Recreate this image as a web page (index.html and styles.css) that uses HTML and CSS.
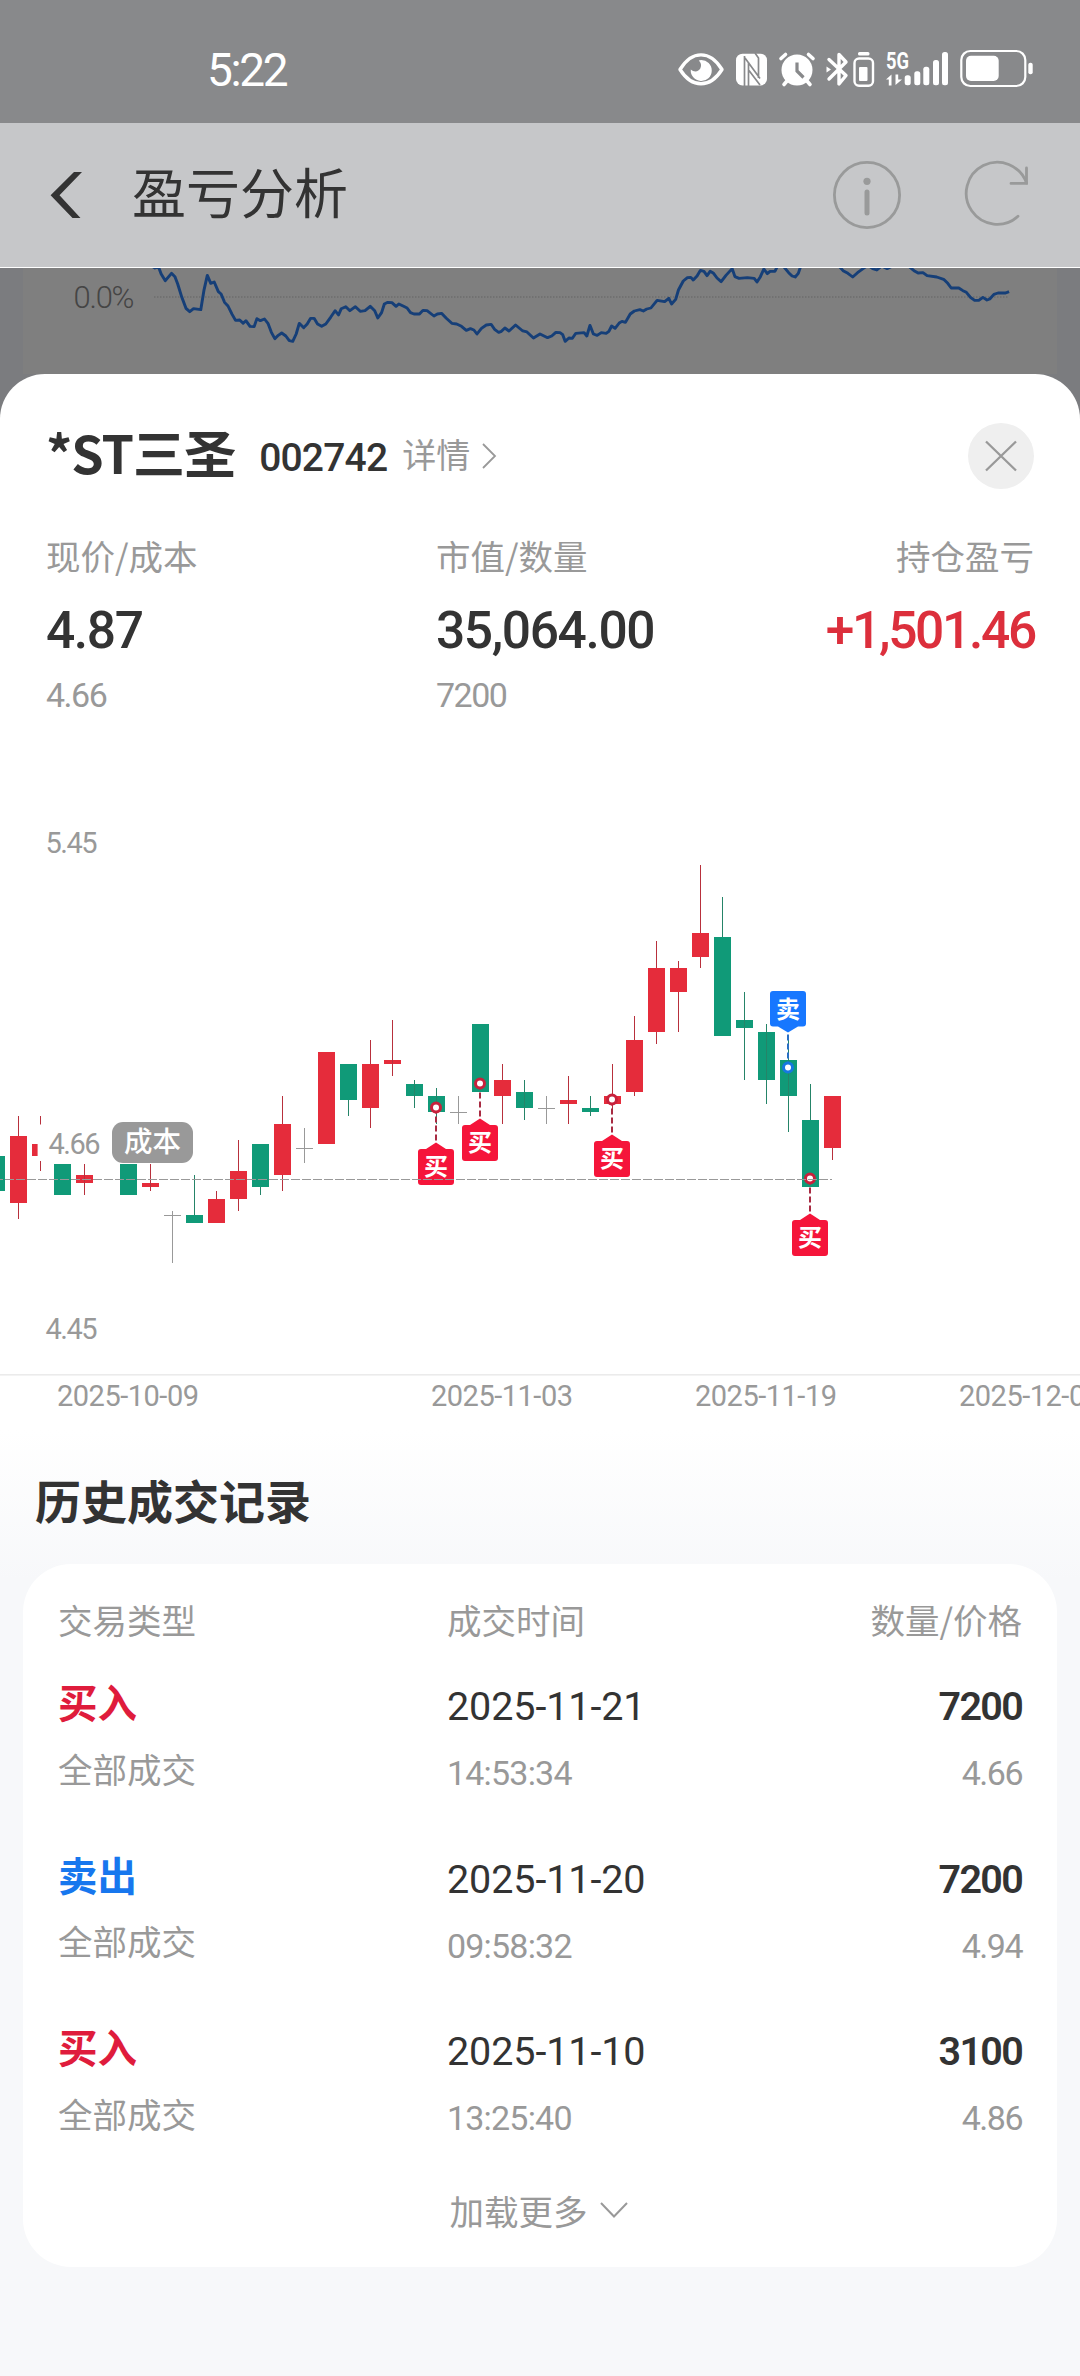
FILE: index.html
```html
<!DOCTYPE html>
<html lang="zh-CN">
<head>
<meta charset="utf-8">
<title>盈亏分析</title>
<link rel="stylesheet" href="styles.css">
</head>
<body>
<div class="page">
  <div class="status">
    <span class="clock">5:22</span>
    <svg class="status-icons" viewBox="670 45 370 50" width="370" height="50">
      <g fill="none" stroke="#fff" stroke-width="3.4">
        <path d="M680 69.500C692 50 710 50 722 69.500C710 88.500 692 88.500 680 69.500Z" stroke-linejoin="round"/>
      </g>
      <path fill="#fff" d="M701 60a10.500 10.500 0 1 1-10.200 9.500c3 3 8 2.500 9.600-1.200c1.300-3 .600-5.800-1.600-7.800z"/>
      <rect x="736" y="53.700" width="31" height="31.800" rx="6.500" fill="#fff"/>
      <path fill="none" stroke="#88898b" stroke-width="1.700" d="M744.500 56V86M745 58L760 78.500M748.500 62V86M749 70.500L760 85M755 53L758.500 58V78"/>
      <circle cx="797" cy="70" r="15.500" fill="#fff"/>
      <g fill="none" stroke="#fff" stroke-width="3.600" stroke-linecap="round">
        <path d="M781 58.500l4.500-4M813 58.500l-4.500-4M787 81l-3 3.500M807 81l3 3.500"/>
        <path d="M797 62.500v8.500l6.500 6.500" stroke="#88898b" stroke-width="3.200" stroke-linecap="butt"/>
        <path d="M829 59.500l17 16-7 8.500V54.500l7 7.500-17 17" stroke-width="3.400" stroke-linejoin="round"/>
      </g>
      <g fill="#fff">
        <path d="M826.500 66.500l4.500 3-4.500 3z"/>
        <rect x="858" y="52" width="11.500" height="3.500" rx="1.500"/>
        <rect x="859" y="67" width="8.500" height="14" rx="1"/>
        <rect x="904.700" y="75.300" width="6" height="10" rx="2.500"/>
        <rect x="914.300" y="71.300" width="6" height="14" rx="2.500"/>
        <rect x="923.300" y="66.700" width="6" height="18.600" rx="2.500"/>
        <rect x="933" y="60" width="6" height="25.300" rx="2.500"/>
        <rect x="942" y="52" width="6" height="33.300" rx="2.500"/>
        <rect x="966" y="55.700" width="32.700" height="25.300" rx="5"/>
        <rect x="1028.300" y="62.700" width="4.400" height="11.500" rx="2"/>
        <path d="M886 79.500l5.500-5v11h-2.700v-6zM902 79.500l-6.500 5.500V74.500h2.700v5z"/>
      </g>
      <rect x="854.500" y="58.500" width="18.500" height="27.300" rx="4.500" fill="none" stroke="#fff" stroke-width="2.400"/>
      <rect x="961.300" y="51" width="64" height="35" rx="9" fill="none" stroke="#fff" stroke-width="2.200"/>
      <text class="net" x="886" y="68.500" textLength="23" lengthAdjust="spacingAndGlyphs">5G</text>
    </svg>
  </div>
  <div class="nav">
    <svg class="back" viewBox="50 171 34 48" width="34" height="48"><path fill="#333" d="M50.600 195.300L74 172h8L59.500 195.300 80.500 218h-8z"/></svg>
    <h1 class="nav-title">盈亏分析</h1>
    <svg class="nav-icons" viewBox="830 160 201 70" width="201" height="70">
      <g fill="none" stroke="#999a9a" stroke-width="2.800" stroke-linecap="round" stroke-linejoin="miter">
        <circle cx="867" cy="195" r="32.600"/>
        <path d="M867 192v21" stroke-width="5"/>
        <path d="M1018 216.300A31 31 0 1 1 1026.500 183"/>
        <path d="M1026.500 168v15.400H1011"/>
      </g>
      <circle cx="867" cy="181.300" r="3.600" fill="#999a9a"/>
    </svg>
  </div>
  <div class="backdrop">
    <svg viewBox="0 268 1080 106" width="1080" height="106">
      <rect x="23" y="268" width="1034" height="106" fill="#7f7f7f"/>
      <path d="M154 297H1008" stroke="#6d6d6d" stroke-width="1.500" stroke-dasharray="1.500 1.500"/>
      <g transform="translate(0 260) scale(.34439 .33333)" fill="none" stroke="#163f78" stroke-width="8.500" stroke-linejoin="round">
        <polyline points="440,18 450,24 460,20 468,42 480,62 498,40 508,50 516,72 528,112 540,145 551,155 562,146 583,149 592,92 602,46 612,70 622,66 634,95 642,102 652,127 662,138 674,163 684,181 696,180 706,190 714,182 726,199 738,200 746,176 756,182 768,177 778,190 788,217 798,236 808,226 818,219 830,228 840,242 850,244 860,222 869,190 882,203 892,192 902,175 912,175 922,192 934,199 946,192 960,172 973,152 983,165 991,146 1004,140 1016,152 1032,140 1046,154 1060,152 1075,139 1088,152 1097,174 1108,158 1116,132 1126,127 1138,128 1150,139 1158,132 1172,139 1182,144 1192,158 1202,162 1218,162 1228,151 1240,152 1260,168 1270,162 1282,160 1296,175 1312,190 1326,192 1340,199 1354,211 1366,206 1376,210 1385,222 1398,205 1412,195 1426,193 1436,208 1448,217 1456,214 1466,204 1478,213 1497,195 1518,213 1530,216 1549,234 1568,222 1590,233 1602,228 1614,217 1626,218 1634,224 1641,244 1652,234 1662,235 1672,220 1696,218 1704,228 1713,196 1723,222 1734,226 1746,218 1760,220 1768,214 1776,198 1786,205 1798,189 1806,184 1816,187 1830,162 1842,153 1858,149 1868,153 1878,147 1890,144 1908,121 1930,125 1942,115 1950,132 1962,118 1970,90 1984,63 1996,53 2006,52 2013,60 2024,48 2034,31 2044,34 2053,47 2062,34 2072,40 2082,54 2094,65 2108,46 2126,26 2134,50 2146,55 2170,53 2190,55 2198,66 2208,50 2218,27 2228,41 2236,34 2250,34 2258,18 2274,18 2290,38 2300,48 2309,51 2318,40 2326,16"/>
        <polyline points="2434,16 2448,32 2462,40 2476,51 2490,38 2506,26 2520,16 2534,26 2546,30 2560,18 2576,26 2592,18"/>
        <polyline points="2640,20 2654,32 2666,39 2680,38 2692,47 2720,51 2740,58 2752,70 2762,84 2784,84 2796,92 2806,97 2818,112 2830,121 2842,121 2854,112 2866,120 2874,117 2886,103 2898,99 2920,99 2930,95"/>
      </g>
      <text class="pct" x="73.500" y="308" textLength="61">0.0%</text>
    </svg>
  </div>
  <main class="sheet">
    <header class="stock">
      <span class="name">*ST三圣</span>
      <span class="code">002742</span>
      <span class="detail">详情</span>
      <svg class="arrow" viewBox="0 0 15 26" width="15" height="26"><path d="M1 1l12 12L1 25" fill="none" stroke="#999" stroke-width="1.800"/></svg>
      <svg class="close" viewBox="0 0 66 66" width="66" height="66"><circle cx="33" cy="33" r="33" fill="#efefef"/><path d="M18 18.500l30 29M48 18.500l-30 29" stroke="#999" stroke-width="2.300"/></svg>
    </header>
    <section class="summary">
      <div class="stat"><span class="label">现价/成本</span><span class="value">4.87</span><span class="sub">4.66</span></div>
      <div class="stat"><span class="label">市值/数量</span><span class="value">35,064.00</span><span class="sub">7200</span></div>
      <div class="stat end"><span class="label">持仓盈亏</span><span class="value gain">+1,501.46</span></div>
    </section>
    <svg class="chart" viewBox="0 730 1080 700" width="1080" height="700">
      <g class="axis-text">
        <text x="45.500" y="853" textLength="52">5.45</text>
        <text x="45.500" y="1339" textLength="52">4.45</text>
        <text x="57" y="1406" textLength="142">2025-10-09</text>
        <text x="431" y="1406" textLength="142">2025-11-03</text>
        <text x="695" y="1406" textLength="142">2025-11-19</text>
        <text x="959" y="1406" textLength="142">2025-12-05</text>
      </g>
      <rect x="0" y="1374" width="1080" height="1.600" fill="#ebebeb"/>
      <g fill="#e52c3b">
        <path d="M10 1136h17v67h-17zM32 1144h17v12h-17zM76 1175h17v8h-17zM142 1183h17v4h-17zM208 1199h17v24h-17zM230 1171h17v28h-17zM274 1124h17v51h-17zM318 1052h17v92h-17zM362 1064h17v44h-17zM384 1060h17v4h-17zM494 1080h17v16h-17zM560 1100h17v4h-17zM604 1096h17v8h-17zM626 1040h17v52h-17zM648 968h17v64h-17zM670 968h17v24h-17zM692 933h17v24h-17zM824 1096h17v52h-17z"/>
      </g>
      <g fill="#b8303c">
        <path d="M18 1116h1v20h-1zM18 1203h1v16h-1zM40 1116h1v28h-1zM40 1156h1v15h-1zM84 1164h1v31h-1zM150 1164h1v27h-1zM216 1191h1v8h-1zM238 1140h1v31h-1zM238 1199h1v12h-1zM282 1096h1v28h-1zM282 1175h1v16h-1zM370 1040h1v24h-1zM370 1108h1v20h-1zM392 1020h1v56h-1zM502 1064h1v16h-1zM502 1096h1v28h-1zM568 1076h1v48h-1zM612 1064h1v47h-1zM634 1016h1v24h-1zM634 1092h1v4h-1zM656 941h1v27h-1zM656 1032h1v12h-1zM678 961h1v7h-1zM678 992h1v40h-1zM700 865h1v68h-1zM700 957h1v11h-1zM832 1148h1v12h-1z"/>
      </g>
      <g fill="#109a78">
        <path d="M0 1156h5v35h-5zM54 1164h17v31h-17zM120 1164h17v31h-17zM186 1215h17v8h-17zM252 1144h17v43h-17zM340 1064h17v36h-17zM406 1084h17v12h-17zM428 1096h17v16h-17zM472 1024h17v68h-17zM516 1092h17v16h-17zM582 1108h17v4h-17zM714 937h17v99h-17zM736 1020h17v8h-17zM758 1032h17v48h-17zM780 1060h17v36h-17zM802 1120h17v67h-17z"/>
      </g>
      <g fill="#258468">
        <path d="M194 1175h1v40h-1zM260 1187h1v8h-1zM348 1100h1v16h-1zM414 1080h1v28h-1zM436 1088h1v36h-1zM524 1080h1v40h-1zM590 1096h1v20h-1zM722 897h1v40h-1zM744 992h1v88h-1zM766 1024h1v80h-1zM788 1040h1v92h-1zM810 1084h1v36h-1z"/>
      </g>
      <g fill="#999">
        <path d="M172 1211h1v52h-1zM164 1215h17v1h-17zM304 1128h1v35h-1zM296 1148h17v1h-17zM458 1096h1v28h-1zM450 1112h17v1h-17zM546 1096h1v28h-1zM538 1108h17v1h-17z"/>
      </g>
      <defs>
        <g id="buy">
          <path d="M0 0V35.500" stroke="#a82b42" stroke-width="2" stroke-dasharray="6 3"/>
          <circle r="4.500" fill="#fff" stroke="#c8213c" stroke-width="3"/>
          <path fill="#f5153a" d="M0 35L-10 41.500H-15q-3 0-3 3v30q0 3 3 3H15q3 0 3-3v-30q0-3-3-3H10z"/>
          <text class="tag" y="67.500">买</text>
        </g>
      </defs>
      <use href="#buy" x="436" y="1107.500"/>
      <use href="#buy" x="480" y="1083.500"/>
      <use href="#buy" x="612" y="1099.500"/>
      <use href="#buy" x="810" y="1178.500"/>
      <g transform="translate(788 1067.500)">
        <path d="M0 0V-35.500" stroke="#2a6fc4" stroke-width="2" stroke-dasharray="6 3"/>
        <circle r="4.500" fill="#fff" stroke="#1678e0" stroke-width="3"/>
        <path fill="#1777ff" d="M0-35L-10-41H-15q-3 0-3-3v-29.500q0-3 3-3H15q3 0 3 3v29.500q0 3-3 3H10z"/>
        <text class="tag" y="-50">卖</text>
      </g>
      <rect x="37.600" y="1124.500" width="74" height="36.500" fill="#fff"/>
      <path d="M0 1179.500H832" stroke="#999" stroke-width="1" stroke-dasharray="9 2" stroke-dashoffset="6"/>
      <rect x="112" y="1122" width="81" height="41" rx="11" fill="#999"/>
      <g class="axis-text"><text x="48.500" y="1154" textLength="52">4.66</text></g>
      <text class="cost" x="152.500" y="1152">成本</text>
    </svg>
    <section class="history">
      <h2 class="history-title">历史成交记录</h2>
      <div class="card">
        <div class="cols head"><span>交易类型</span><span>成交时间</span><span class="right">数量/价格</span></div>
        <div class="trade">
          <div class="cols main"><span class="buy">买入</span><span class="date">2025-11-21</span><span class="qty">7200</span></div>
          <div class="cols minor"><span>全部成交</span><span class="num">14:53:34</span><span class="num price">4.66</span></div>
        </div>
        <div class="trade">
          <div class="cols main"><span class="sell">卖出</span><span class="date">2025-11-20</span><span class="qty">7200</span></div>
          <div class="cols minor"><span>全部成交</span><span class="num">09:58:32</span><span class="num price">4.94</span></div>
        </div>
        <div class="trade">
          <div class="cols main"><span class="buy">买入</span><span class="date">2025-11-10</span><span class="qty">3100</span></div>
          <div class="cols minor"><span>全部成交</span><span class="num">13:25:40</span><span class="num price">4.86</span></div>
        </div>
        <div class="more"><span>加载更多</span><svg viewBox="0 0 28 16" width="28" height="16"><path d="M1 1l13 13.500L27 1" fill="none" stroke="#999" stroke-width="2"/></svg></div>
      </div>
    </section>
  </main>
</div>
</body>
</html>
```
FILE: styles.css
```css
* { box-sizing: border-box; margin: 0; padding: 0; }
body {
  width: 1080px;
  background: #7b7c7f;
  font-family: "Noto Sans CJK SC", sans-serif;
  color: #333;
}
svg { display: block; flex: none; }
span, h1, h2 { white-space: nowrap; }
.page { width: 1080px; height: 2376px; overflow: hidden; display: flex; flex-direction: column; }

.status {
  height: 123px; background: #88898b; flex: none;
  display: flex; justify-content: space-between; align-items: flex-start;
  padding: 45px 40px 0 207px;
}
.clock { font: 400 46px/51px Roboto, sans-serif; color: #fff; letter-spacing: -2.4px; }
.net { font: 700 23px Roboto, sans-serif; fill: #fff; }

.nav {
  height: 145px; flex: none; background: #c6c7c9; border-bottom: 1px solid #fff;
  display: flex; align-items: center; padding: 0 49px 0 50px;
}
.nav-title { font-size: 54px; font-weight: 400; line-height: 80px; margin-left: 48px; margin-top: -9px; }
.nav-icons { margin-left: auto; }

.backdrop { height: 106px; flex: none; }
.pct { font: 300 31px Roboto, sans-serif; fill: #454545; }

.sheet {
  flex: 1; background: #fff; border-radius: 45px 45px 0 0;
  display: flex; flex-direction: column;
}
.stock { height: 66px; margin: 49px 46px 0; display: flex; align-items: center; }
.name { font-size: 52px; font-weight: 700; line-height: 66px; letter-spacing: -1px; margin-top: -8px; }
.code { font: 500 39px/44px Roboto, sans-serif; letter-spacing: -.8px; margin-left: 24px; margin-top: 4px; }
.detail { font-size: 34px; line-height: 44px; color: #999; margin-left: 15px; margin-top: -4px; }
.arrow { margin-left: 12px; }
.close { margin-left: auto; }

.summary {
  height: 241px; padding: 40px 46px 0;
  display: grid; grid-template-columns: 390px 300px 1fr;
}
.stat { display: flex; flex-direction: column; align-items: flex-start; }
.stat.end { align-items: flex-end; }
.label { font-size: 34.5px; line-height: 52px; color: #999; }
.value { font: 500 51.5px/60px Roboto, sans-serif; letter-spacing: -1.4px; margin-top: 20px; }
.gain { color: #dc2f3c; letter-spacing: -2.3px; margin-right: -1px; }
.sub { font: 400 34px/40px Roboto, sans-serif; letter-spacing: -1.5px; color: #999; margin-top: 14px; }

.chart { overflow: hidden; }
.axis-text { font: 400 29px Roboto, sans-serif; fill: #999; }
.tag { font: 700 24px "Noto Sans CJK SC", sans-serif; fill: #fff; text-anchor: middle; }
.cost { font: 500 28.5px "Noto Sans CJK SC", sans-serif; fill: #fff; text-anchor: middle; }

.history {
  flex: 1; padding: 35px 23px 0;
  background: linear-gradient(#fff, #f7f8fa 150px);
}
.history-title { font-size: 46px; font-weight: 700; line-height: 68px; margin-left: 12px; }
.card {
  margin-top: 31px; height: 703px; background: #fff; border-radius: 48px;
  padding: 29px 35px 0;
}
.cols { display: grid; grid-template-columns: 389px 1fr auto; align-items: center; }
.head { font-size: 34.5px; line-height: 52px; color: #999; }
.right { text-align: right; }
.trade { height: 172.5px; padding-top: 20px; }
.main { height: 60px; }
.buy, .sell { font-size: 39.5px; line-height: 60px; font-weight: 700; color: #df1c3c; }
.sell { color: #1777ee; }
.date { font: 400 39.5px/60px Roboto, sans-serif; letter-spacing: -.1px; padding-top: 12px; }
.qty { font: 600 39.5px/60px Roboto, sans-serif; letter-spacing: -1.7px; padding-top: 12px; }
.minor { font-size: 34.5px; height: 52px; line-height: 52px; color: #999; margin-top: 11px; }
.num { font: 400 34px/52px Roboto, sans-serif; letter-spacing: -.8px; padding-top: 11px; }
.price { letter-spacing: -1.5px; text-align: right; }
.more { display: flex; align-items: center; justify-content: center; gap: 12px; font-size: 34.5px; line-height: 52px; color: #999; margin: 21px 3px 0 0; }
```
